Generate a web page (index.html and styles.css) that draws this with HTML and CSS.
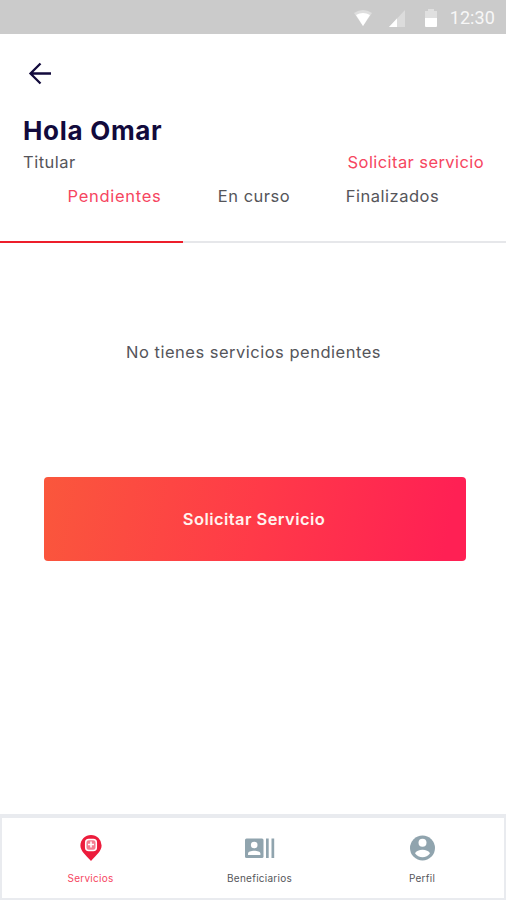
FILE: index.html
```html
<!DOCTYPE html>
<html lang="es">
<head>
<meta charset="utf-8">
<meta name="viewport" content="width=device-width, initial-scale=1">
<title>Servicios</title>
<link rel="stylesheet" href="styles.css">
</head>
<body>
<div class="status">
  <svg class="wifi" width="18" height="16" viewBox="0 0 18 16"><path d="M0 3Q9-3 18 3L9 16Z" fill="#dedede"/><path d="M2 5Q9 1 16 5L9 16Z" fill="#fff"/></svg>
  <svg class="signal" width="16" height="17" viewBox="0 0 16 17"><path d="M16 0V17H0Z" fill="#dcdcdc"/><path d="M8 8.5V17H0Z" fill="#fff"/></svg>
  <svg class="battery" width="12" height="18" viewBox="0 0 12 18"><path d="M3 2V0H9V2H12V9H0V2Z" fill="#e0e0e0"/><path d="M0 9H12V17Q12 18 11 18H1Q0 18 0 17Z" fill="#fff"/></svg>
  <span class="clock">12:30</span>
</div>
<header class="header">
  <svg class="back" width="24" height="24" viewBox="0 0 24 24" fill="none" stroke="#120a3c" stroke-width="2.3"><path d="M24 11.500H4M13.500 1.500L3.500 11.500L13.500 21.500"/></svg>
  <h1 class="greeting">Hola Omar</h1>
  <div class="account"><span class="role">Titular</span><a class="request">Solicitar servicio</a></div>
</header>
<nav class="tabs">
  <a class="tab active"><span class="pending">Pendientes</span></a>
  <a class="tab"><span class="current">En curso</span></a>
  <a class="tab"><span class="finished">Finalizados</span></a>
</nav>
<main class="content">
  <p class="empty">No tienes servicios pendientes</p>
  <button class="cta">Solicitar Servicio</button>
</main>
<footer class="bottom">
  <a class="item item-services">
    <svg width="24" height="28" viewBox="0 0 24 28"><path d="M12 1A10.6 10.6 0 0 0 1.4 11.6C1.4 17 6.5 21 12 27C17.500 21 22.600 17 22.600 11.600A10.600 10.600 0 0 0 12 1Z" fill="#ec1c3c"/><rect x="6.700" y="5.500" width="10.600" height="11" rx="3" fill="#f47d90" stroke="#fff" stroke-width="1.500"/><path d="M12 7.500V13.500M9 10.500H15" fill="none" stroke="#fff" stroke-width="1.600"/></svg>
    <span>Servicios</span>
  </a>
  <a class="item item-members">
    <svg width="30" height="28" viewBox="0 0 30 28" fill="#90a4ae"><rect x="0" y="4.500" width="18.500" height="19.500" rx="1.500"/><rect x="21" y="4.500" width="2.700" height="19.500"/><rect x="26.500" y="4.500" width="2.700" height="19.500"/><circle cx="9.200" cy="11" r="3.300" fill="#fff"/><path d="M3 21V19.500C3 15.800 15.400 15.800 15.400 19.500V21Z" fill="#fff"/></svg>
    <span>Beneficiarios</span>
  </a>
  <a class="item item-profile">
    <svg width="26" height="28" viewBox="0 0 26 28"><circle cx="13.500" cy="14" r="12.500" fill="#90a4ae"/><circle cx="13.500" cy="8.800" r="4" fill="#fff"/><path d="M6 19.300C8 14.500 19 14.500 21 19.300C17.500 24.500 9.500 24.500 6 19.300Z" fill="#fff"/></svg>
    <span>Perfil</span>
  </a>
</footer>
</body>
</html>
```
FILE: styles.css
```css
* { box-sizing: border-box; }
body {
  margin: 0;
  height: 900px;
  display: flex;
  flex-direction: column;
  overflow: hidden;
  background: #fff;
  color: #55555a;
  font: 400 16.5px/24px Inter, "Open Sans", sans-serif;
  letter-spacing: 0.5px;
}
svg { display: block; flex: none; }
.status {
  height: 34px;
  padding: 2px 11px 0 0;
  display: flex;
  align-items: center;
  justify-content: flex-end;
  background: #cbcbcb;
}
.signal { margin-left: 17px; }
.battery { margin-left: 20px; }
.clock { margin-left: 13px; color: #f7f7f7; font: 400 18px/24px Roboto, sans-serif; letter-spacing: 0.1px; }
.header { height: 141px; padding: 28px 22px 0 23px; }
.back { margin-left: 4px; }
.greeting {
  margin: 28px 0 0;
  color: #120a3c;
  font-size: 26px;
  line-height: 34px;
  font-weight: 700;
  letter-spacing: 0.7px;
}
.account { padding-top: 2px; display: flex; justify-content: space-between; }
.request, .active { color: #f6465f; }
.request { letter-spacing: 0.42px; }
.pending { letter-spacing: 0.7px; }
.tabs {
  height: 68px;
  display: grid;
  grid-template-columns: 183px 142px 181px;
}
.tab { padding-top: 9px; text-align: center; border-bottom: 2px solid #e6e7ea; }
.active { padding-left: 46px; border-color: #ed1e2b; }
.tab:last-child { padding-right: 46px; }
.content { flex: 1; padding: 97px 40px 0 44px; }
.empty { margin: 0 3px 113px 0; text-align: center; }
.cta {
  display: block;
  width: 422px;
  height: 84px;
  padding: 0 2px 0 0;
  border: 0;
  border-radius: 4px;
  background: linear-gradient(100deg, #fa573c, #ff3a48 50%, #ff2054 95%);
  color: #fff3ee;
  font: 600 16.5px/24px Inter, sans-serif;
  letter-spacing: 0.42px;
}
.bottom {
  height: 86px;
  border: 2px solid #e9ebef;
  border-top-width: 4px;
  display: grid;
  grid-template-columns: 177px 161px 164px;
  color: #55565a;
  font-size: 10px;
  line-height: 14px;
  letter-spacing: 0.25px;
}
.item { padding-top: 16px; display: flex; flex-direction: column; align-items: center; gap: 9px; }
.item-services { color: #f6465f; }
```
